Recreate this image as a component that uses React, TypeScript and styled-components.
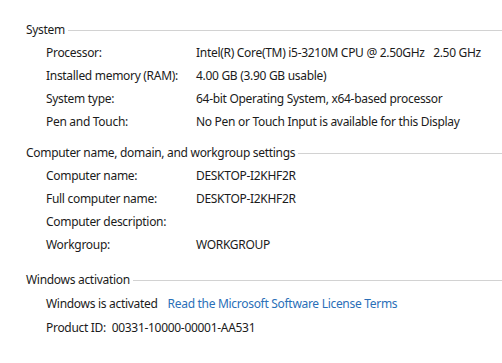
import React from 'react';
import styled, { createGlobalStyle } from 'styled-components';

const GlobalStyle = createGlobalStyle`
  html, body {
    margin: 0;
    padding: 0;
    background: #fff;
  }
  body {
    font-family: 'Noto Sans', 'Open Sans', sans-serif;
    font-size: 12px;
    letter-spacing: -0.3px;
    color: #1b1b1b;
  }
`;

const Page = styled.div`
  width: 502px;
  height: 363px;
  overflow: hidden;
  padding: 18px 0 0 26px;
  box-sizing: border-box;
`;

const Section = styled.section<{ gapAfter: number }>`
  margin-bottom: ${({ gapAfter }) => gapAfter}px;
`;

const Heading = styled.div`
  display: flex;
  align-items: center;
  height: 23px;
  white-space: nowrap;

  &::after {
    content: '';
    flex: 1;
    height: 1px;
    background: #d2d2d2;
    margin-left: 3px;
    margin-top: 1px;
  }
`;

const Row = styled.div`
  display: grid;
  grid-template-columns: 150px 1fr;
  align-items: center;
  height: 23px;
  padding-left: 20px;
  white-space: nowrap;
`;

const Label = styled.span``;

const Value = styled.span``;

const Inline = styled.div`
  display: flex;
  align-items: center;
  gap: 10px;
  height: 24px;
  padding-left: 20px;
  white-space: nowrap;
`;

const Link = styled.a`
  color: #2a6fb8;
  text-decoration: none;
  cursor: pointer;
`;

type Item = [string, string];

const system: Item[] = [
  ['Processor:', 'Intel(R) Core(TM) i5-3210M CPU @ 2.50GHz\u00a0\u00a0 2.50 GHz'],
  ['Installed memory (RAM):', '4.00 GB (3.90 GB usable)'],
  ['System type:', '64-bit Operating System, x64-based processor'],
  ['Pen and Touch:', 'No Pen or Touch Input is available for this Display']
];

const computer: Item[] = [
  ['Computer name:', 'DESKTOP-I2KHF2R'],
  ['Full computer name:', 'DESKTOP-I2KHF2R'],
  ['Computer description:', ''],
  ['Workgroup:', 'WORKGROUP']
];

function Rows({ items }: { items: Item[] }) {
  return (
    <>
      {items.map(([label, value]) => (
        <Row key={label}>
          <Label>{label}</Label>
          <Value>{value}</Value>
        </Row>
      ))}
    </>
  );
}

export default function App() {
  return (
    <Page>
      <GlobalStyle />
      <Section gapAfter={8}>
        <Heading>System</Heading>
        <Rows items={system} />
      </Section>
      <Section gapAfter={12}>
        <Heading>Computer name, domain, and workgroup settings</Heading>
        <Rows items={computer} />
      </Section>
      <Section gapAfter={0}>
        <Heading>Windows activation</Heading>
        <Inline>
          <span>Windows is activated</span>
          <Link>Read the Microsoft Software License Terms</Link>
        </Inline>
        <Inline>Product ID:&nbsp; 00331-10000-00001-AA531</Inline>
      </Section>
    </Page>
  );
}
